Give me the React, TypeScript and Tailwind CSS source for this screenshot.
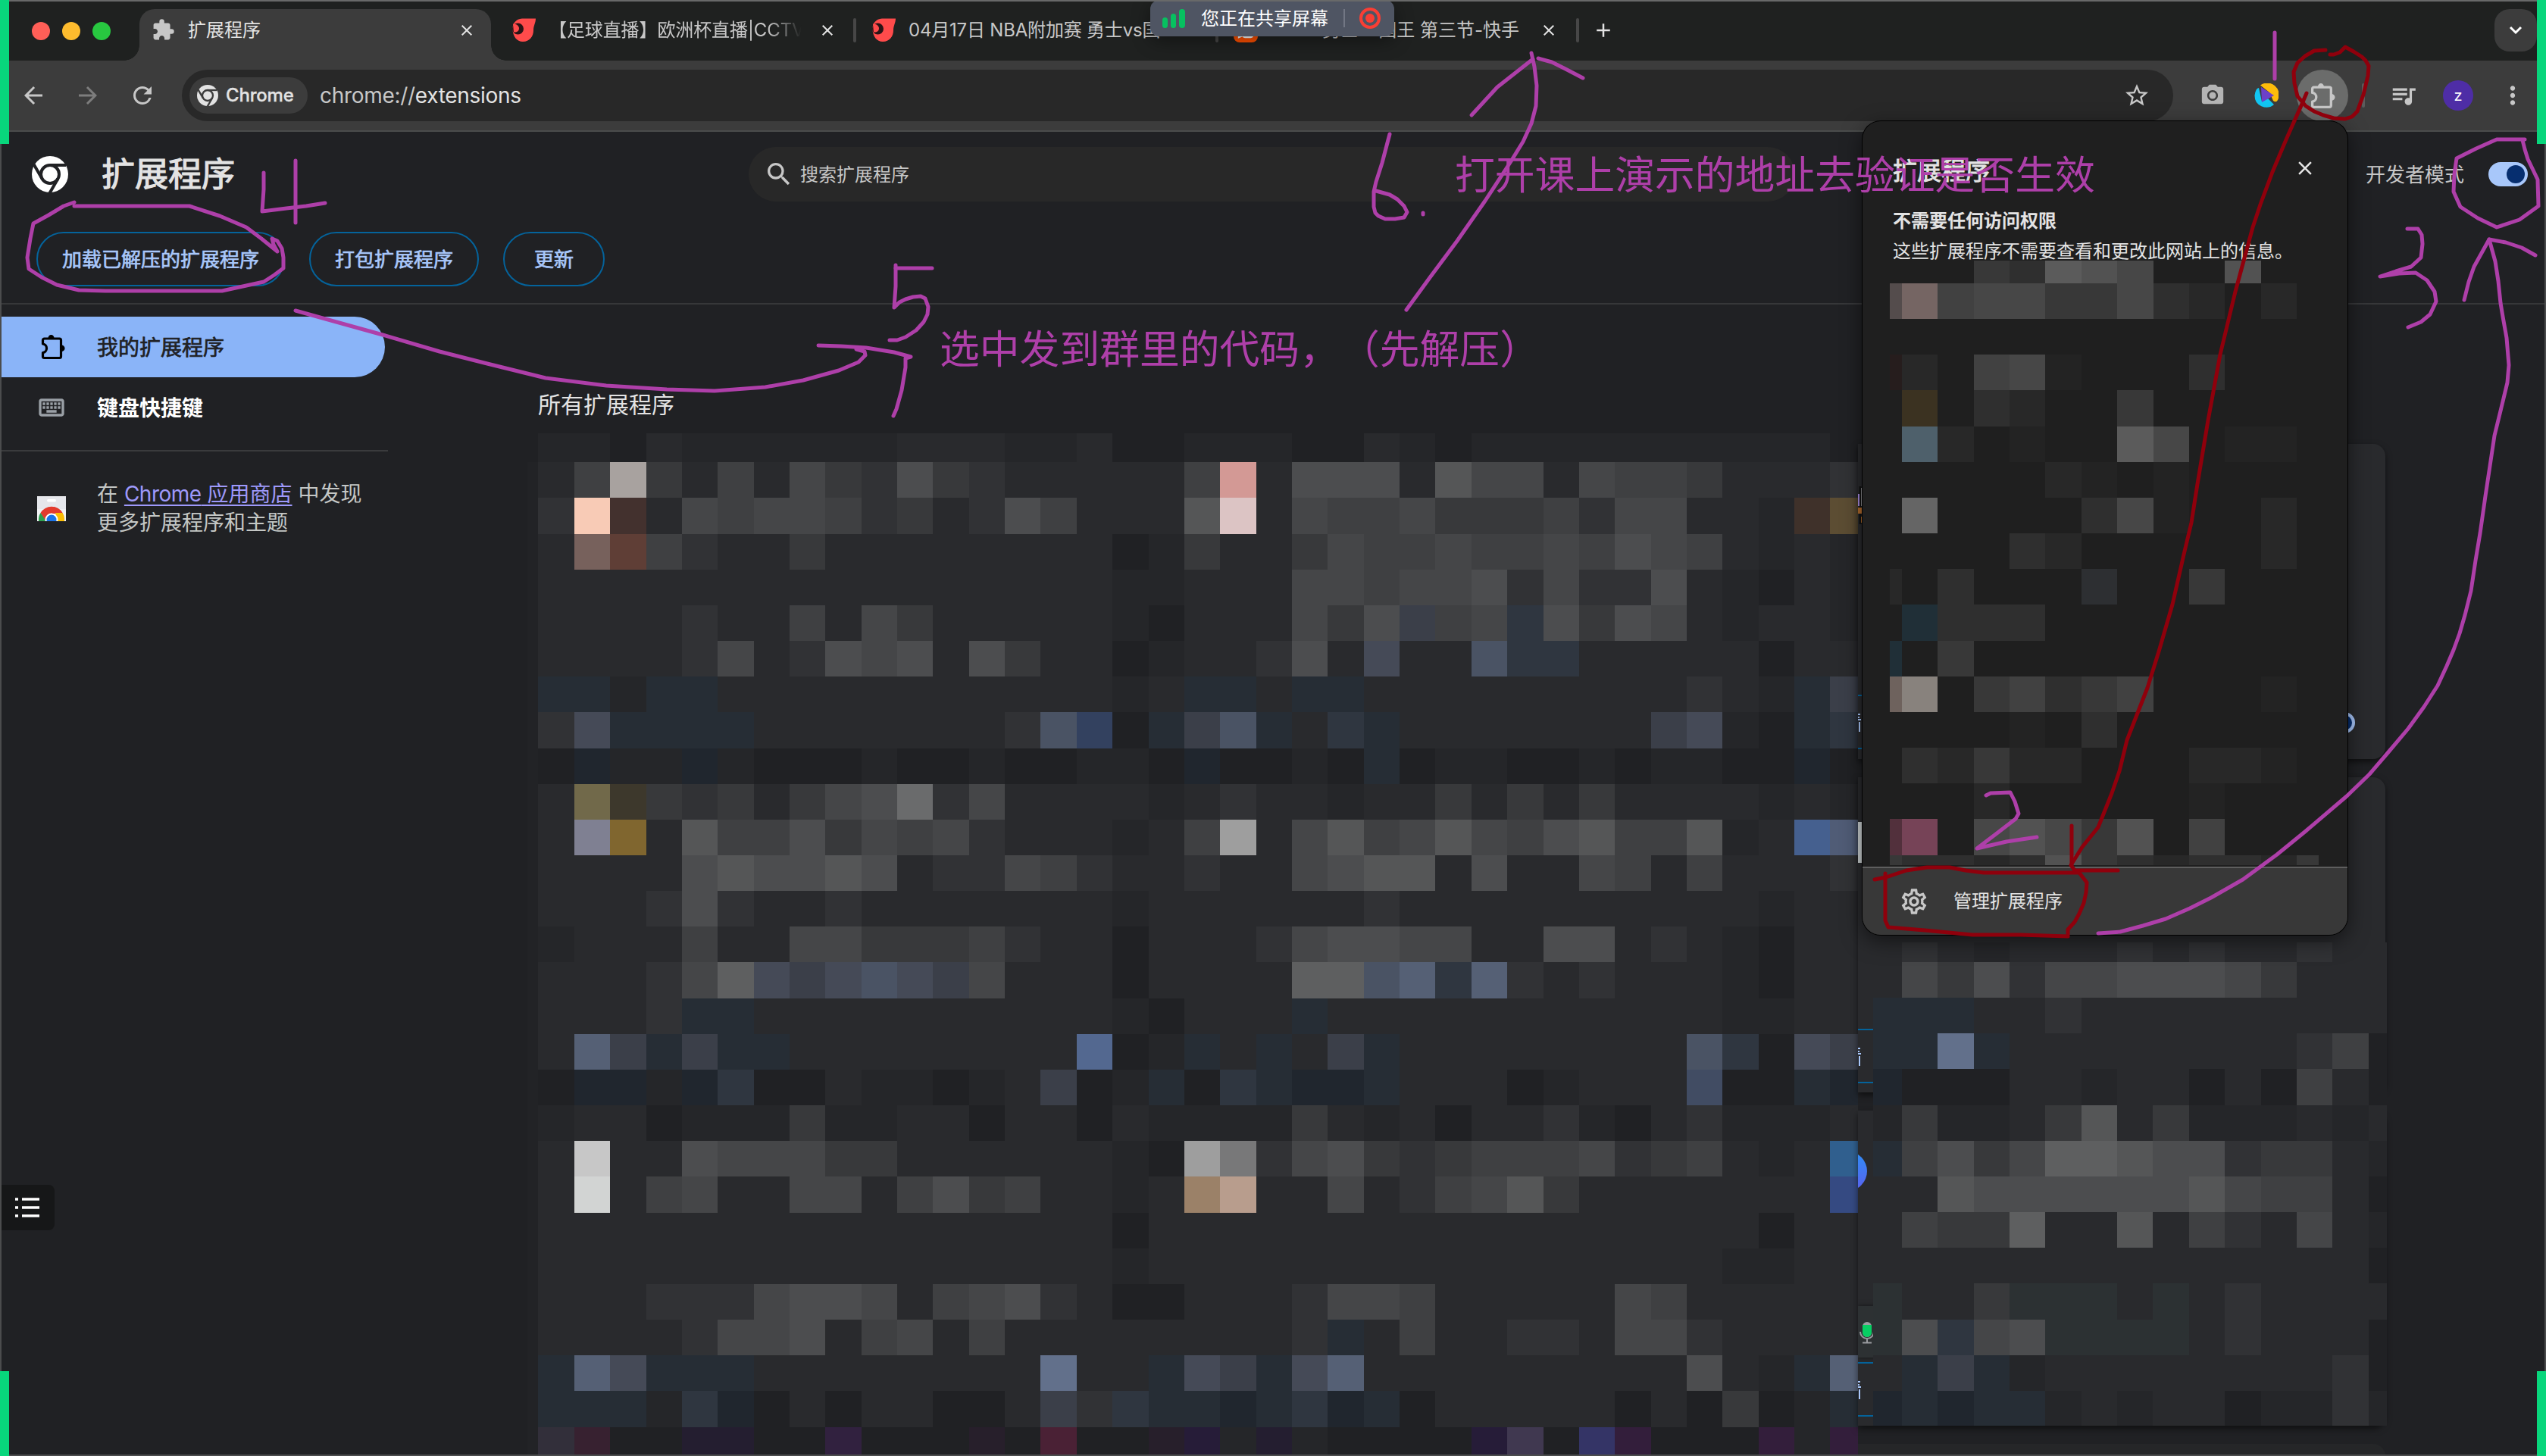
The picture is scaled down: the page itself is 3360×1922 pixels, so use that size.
import React from "react";
import {
  MdAdd,
  MdArrowBack,
  MdArrowForward,
  MdClose,
  MdExtension,
  MdMoreVert,
  MdOutlineKeyboard,
  MdOutlineQueueMusic,
  MdOutlineSettings,
  MdPhotoCamera,
  MdRefresh,
  MdSearch,
  MdStarBorder,
} from "react-icons/md";

/* ---------- pixelated regions ---------- */

const PALETTE: Record<string, string> = {
  a: "#202124", b: "#252629", ".": "#292a2d", d: "#313235", e: "#38393b", f: "#3f4042",
  g: "#454648", h: "#4c4d4f", i: "#555657", j: "#5e5f60", k: "#6a6b6c", l: "#2c3133",
  m: "#20262e", n: "#262d35", o: "#2f3640", p: "#3b3f49", q: "#454a57", r: "#4a5364",
  s: "#556075", t: "#62708b",
  A: "#a8a29f", B: "#f8cbb6", C: "#43312e", D: "#77615c", E: "#5f3e36", F: "#33415f",
  G: "#71694a", H: "#3d382c", I: "#7f8092", J: "#80662f", K: "#d39995", L: "#dcc4c4",
  M: "#3f312a", N: "#5c4d33", O: "#45608f", P: "#505c76", Q: "#9e9e9e", R: "#536890",
  S: "#c7c7c7", T: "#d2d4d3", U: "#787879", V: "#9b8168", W: "#b89d8d", X: "#305f8e",
  Y: "#354a82", Z: "#414c63",
  "0": "#271f2b", "1": "#241e30", "2": "#372130", "3": "#31213f", "4": "#4a2135",
  "5": "#322f3a", "6": "#403850", "7": "#343466", "8": "#261c38", "9": "#331e3b",
  _: "#1f1f1f", u: "#232323", v: "#282828", w: "#2f2f2f", x: "#383838", y: "#414141",
  z: "#474747", "+": "#525252", "=": "#5b5b5b", "!": "#544c4c", "@": "#756563",
  "#": "#261d1d", $: "#3b3221", "%": "#4e606b", "^": "#656565", "&": "#2d2f32",
  "*": "#202f37", "(": "#6e625d", ")": "#88827d", "[": "#52303c", "]": "#764357",
};

const CARDS_MOSAIC = [
  "bba.bbbbbb...bb.aabbbaa.babbbbbbbbbba",
  ".fAe.f.gedhed.....fK.hhh.igg.gffe...d",
  "dBC.gfggfde.dhf...iL.gffgeeefdgg..bMN",
  ".DEfd..e........abe..egffgffgfhgf.b.b",
  "................bb...ggfgghdgddh.ba.b",
  "....d..f.ge.....ba...gehpfgohehg.b..b",
  "....dg.dhgh.he..ab..dh.q..roo.....a..",
  "nnbnn...........b.nn.nn.........d.bnp",
  "dqnnnn.......drFanprn.on.......pqbano",
  "ambbmbaaabaabaabbamaabanabbaababbaama",
  ".GHede.eghkdg....b.d..b..e.e.e....b.b",
  ".IJ.iffhegfgd...b.fQ.gifgigfhiffib.OP",
  "....hihhih.ddgfd..d..ghii.h..gf.f...d",
  "...dhd..d.......b......d..........b..",
  "b...f..ggeeefd..a...dghhgg..hh.d.ba..",
  "...dgjqpqrqpg...a....jjrsosd.d...ba..",
  "...dnn..........ba...n...........bb..",
  ".spnpnn........Rabn.n.pn........roaqp",
  "ammbmoaa.bbab.pabnaonmmn...ab...Zaanm",
  "b..abbbebb..a..a.bbbbe.b.a..dba.dbbb.",
  ".S..hgggee......baQUdghedefffgdef.b.X",
  ".T.fg..gg.fhef..b.VW..g.dfgie.......Y",
  "................a.................a..",
  "................b................bb..",
  "...dddghhg.fghd.aa...dggf.....gf.....",
  "....dggh.fg.f........dn.f..dd.ggd....",
  "nsqnnn........t..nqpnqs.........h.bns",
  "nnnboma.a..aa.pdonnmnomna.....a.aeabn",
  "52aa11aa3aaa0a4aa08b1baaaa86a79aaa9b9",
];

const POPUP_MOSAIC = [
  "___xw=+z__+__", "!@yzzxxzwv_v_", "_____________", "#v_yzu___w___", "_$_wv__x_____",
  "_%v_u__=z_uu_", "_____vu_u____", "_^____wzu__v_", "____wv_____v_", "v_w___&__x___",
  "_*www________", "*_x__________", "()_xywxy___u_", "____u_w______", "_wvxvv___vvu_",
  "___v_____u___", "[]_z+zx+_y___", "xwwvw+xwvwwvx",
];

const THIRD_CARD_MOSAIC = [
  ".d.b...d.d..d..", ".gehdgghhhge...", "nnn..d.........", "nntn........dfa",
  "maaa..b..a.af.a", "bebb.ei.ebbb.b.", "nfhegjjihhdee.b", "..ihhhhhhigff.a",
  ".feej..i.fd.g.b", "..............a", "l..elll.l.d....", "lhoghllll.d...a",
  ".npnb........da", "mnmnnb.b..abbdb",
];

const CELL_W = 47.36;
const CELL_H = 47.17;

type MosaicProps = { rows: string[]; first: number; last: number; top: number; bottom: number };

function Mosaic({ rows, first, last, top, bottom }: MosaicProps) {
  const cols = rows[0].length;
  return (
    <div
      className="grid shrink-0"
      style={{
        gridTemplateColumns: `${first}px repeat(${cols - 2}, ${CELL_W}px) ${last}px`,
        gridTemplateRows: `${top}px repeat(${rows.length - 2}, ${CELL_H}px) ${bottom}px`,
      }}
    >
      {rows.flatMap((row, r) =>
        row.split("").map((c, i) => <div key={`${r}-${i}`} style={{ backgroundColor: PALETTE[c] }} />)
      )}
    </div>
  );
}

/* ---------- icons ---------- */

function ChromeMark({ className, gap }: { className: string; gap: string }) {
  return (
    <svg viewBox="0 0 48 48" className={className}>
      <circle cx="24" cy="24" r="24" fill="currentColor" />
      <g stroke={gap} strokeWidth="4" fill="none">
        <circle cx="24" cy="24" r="12" />
        <path d="M24 12H45" />
        <path d="M24 12H46" transform="rotate(120 24 24)" />
        <path d="M24 12H46" transform="rotate(240 24 24)" />
      </g>
    </svg>
  );
}

function PuzzleOutline({ className }: { className: string }) {
  return (
    <svg viewBox="0 0 34 34" className={className} fill="none">
      <path
        d="M3.5 13V8a2 2 0 0 1 2-2h20a2 2 0 0 1 2 2v21.500a2 2 0 0 1-2 2h-20a2 2 0 0 1-2-2V24.500a5.800 5.800 0 0 0 0-11.500z"
        stroke="currentColor"
        strokeWidth="3.200"
        strokeLinejoin="round"
      />
      <path d="M10.500 5.500a4 4.500 0 0 1 8 0zM28 14.500a4.500 4.200 0 0 1 0 8.500z" fill="currentColor" />
    </svg>
  );
}

function CctvIcon() {
  return (
    <svg viewBox="0 0 32 32" className="h-8 w-8 shrink-0">
      <path d="M31 0.500L13 0.500C5 1 0 7 0.500 15C1 24 6 31 14 31C23 31 28 24 28 16C28 10 31 6 31 0.500Z" fill="#ff4b4b" />
      <circle cx="7.500" cy="14" r="7.500" fill="#2a1416" />
      <path d="M1 7.500C5 7 9 10 9 13.500C9 17 6 19 2 18.500Z" fill="#ff4b4b" />
    </svg>
  );
}

function StoreIcon() {
  return (
    <svg viewBox="0 0 38 33" className="h-[33px] w-[38px]">
      <rect width="38" height="33" fill="#f1f1f4" />
      <rect width="38" height="17" fill="#e6e7ec" />
      <rect x="13" y="4" width="12" height="3.500" rx="1.700" fill="#fff" />
      <path d="M19 14a17 17 0 0 1 15 9H19z" fill="#d93025" />
      <path d="M4.500 22A17 17 0 0 1 33.500 22L19 22 12 33H10z" fill="#e33b2e" />
      <path d="M4.500 22A17 17 0 0 0 2 33H12z" fill="#2ea04f" />
      <path d="M33.500 22A17 17 0 0 1 36 33H26L24 22z" fill="#fbbc04" />
      <circle cx="19" cy="31" r="8.500" fill="#fff" />
      <circle cx="19" cy="31" r="6.500" fill="#1a73e8" />
    </svg>
  );
}

/* ---------- tab strip ---------- */

function TabStrip() {
  return (
    <div className="flex h-20 shrink-0 items-start bg-[#1f2120] pl-[42px] text-[24px] leading-none text-[#c7c7c7]">
      <div className="flex h-20 w-[142px] items-center gap-4 pt-[2px]">
        <span className="h-6 w-6 rounded-full bg-[#ff5f57]" />
        <span className="h-6 w-6 rounded-full bg-[#febc2e]" />
        <span className="h-6 w-6 rounded-full bg-[#28c840]" />
      </div>
      <div className="relative mt-3 flex h-[68px] w-[464px] items-start rounded-t-[20px] bg-[#3c3c3c] pl-[16px] pt-[12px] text-[#e3e3e3]">
        <div className="absolute -left-5 bottom-0 h-5 w-5 bg-[radial-gradient(circle_at_0_0,#1f2120_19.5px,#3c3c3c_20px)]" />
        <div className="absolute -right-5 bottom-0 h-5 w-5 bg-[radial-gradient(circle_at_100%_0,#1f2120_19.5px,#3c3c3c_20px)]" />
        <MdExtension className="h-[31px] w-[31px] text-[#c7c7c7]" />
        <span className="ml-[17px] w-[356px] pt-[4px]">扩展程序</span>
        <MdClose className="mt-[4px] h-6 w-6 text-[#e3e3e3]" />
      </div>
      <div className="flex h-20 w-[482px] items-center pl-[28px]">
        <CctvIcon />
        <span className="ml-[16px] w-[344px] overflow-hidden whitespace-nowrap pb-[2px] pt-[2px] tracking-[-0.1px] [mask-image:linear-gradient(90deg,#000_84%,transparent_97%)]">
          【足球直播】欧洲杯直播|CCTV
        </span>
        <MdClose className="ml-[12px] h-6 w-6 text-[#e3e3e3]" />
        <span className="ml-auto h-8 w-[4px] rounded-full bg-[#474747]" />
      </div>
      <div className="flex h-20 w-[478px] items-center pl-[21px]">
        <CctvIcon />
        <span className="ml-[16px] whitespace-nowrap tracking-[-0.2px]">04月17日 NBA附加赛 勇士vs国</span>
        <span className="ml-auto h-8 w-[4px] rounded-full bg-[#474747]" />
      </div>
      <div className="flex h-20 w-[476px] items-center pl-5">
        <span className="flex h-8 w-8 items-center justify-center rounded-lg bg-[#ff5000]">
          <svg viewBox="0 0 20 20" className="h-[22px] w-[22px]" fill="none" stroke="#fff" strokeWidth="2.500">
            <circle cx="6" cy="4" r="2.500" />
            <circle cx="13" cy="4" r="3" />
            <rect x="7" y="10" width="11" height="8" rx="2" />
            <path d="M2 12l5 2v2l-5 2z" />
          </svg>
        </span>
        <span className="ml-[16px] flex w-[344px] whitespace-nowrap">
          <span className="w-[69px]">4.17</span>
          <span>勇士vs国王 第三节-快手</span>
        </span>
        <MdClose className="ml-[12px] h-6 w-6 text-[#e3e3e3]" />
        <span className="ml-auto h-8 w-[4px] rounded-full bg-[#474747]" />
      </div>
      <div className="flex h-20 w-[64px] items-center justify-center">
        <MdAdd className="h-[30px] w-[30px] text-[#e3e3e3]" />
      </div>
      <div className="ml-auto mr-3 mt-3 flex h-14 w-14 items-center justify-center rounded-[20px] bg-[#3c3c3c]">
        <svg viewBox="0 0 18 12" className="h-3 w-[18px]" fill="none" stroke="#fff" strokeWidth="3">
          <path d="M2 2l7 7 7-7" />
        </svg>
      </div>
    </div>
  );
}

function Toolbar() {
  return (
    <div className="flex h-[94px] shrink-0 items-center border-b-2 border-[#4a4c4b] bg-[#3c3c3c] pl-[26px] text-[#c7c7c7]">
      <MdArrowBack className="h-9 w-9" />
      <MdArrowForward className="ml-[36px] h-9 w-9 text-[#7d7d7d]" />
      <MdRefresh className="ml-[36px] h-9 w-9" />
      <div className="ml-[34px] flex h-[68px] w-[2628px] items-center rounded-full bg-[#282828] pl-[10px] pr-[30px]">
        <div className="flex h-12 w-[156px] items-center rounded-full bg-[#3c3c3c] pl-[10px] text-[#e3e3e3]">
          <ChromeMark className="h-7 w-7" gap="#3c3c3c" />
          <span className="ml-[10px] text-[24px] font-medium tracking-[-0.2px] [-webkit-text-stroke:0.3px]">Chrome</span>
        </div>
        <span className="ml-[16px] whitespace-nowrap text-[28px] tracking-[-0.3px] text-[#c7c7c7]">
          chrome://<span className="text-[#e3e3e3]">extensions</span>
        </span>
        <MdStarBorder className="ml-auto h-[36px] w-[36px]" />
      </div>
      <MdPhotoCamera className="ml-[35px] h-[34px] w-[34px] text-[#b4b4b4]" />
      <svg viewBox="0 0 32 32" className="ml-[38px] h-8 w-8">
        <path d="M8 2.500A15.500 15.500 0 0 1 31 22Q29 26 25 23L20 12z" fill="#fdbc0b" />
        <path d="M6 6Q2 6 0.500 16A15.500 15.500 0 0 0 26 28L18 20 10 24z" fill="#12c6f2" />
        <path d="M9 5L26 16 10 25z" fill="#6c40c8" />
      </svg>
      <div className="ml-[24px] flex h-[68px] w-[68px] items-center justify-center rounded-full bg-[#6b6c6b]">
        <PuzzleOutline className="h-[35px] w-[35px]" />
      </div>
      <span className="ml-[18px] h-8 w-[4px] rounded-full bg-[#5c5c5c]" />
      <MdOutlineQueueMusic className="ml-[32px] h-[38px] w-[38px]" />
      <span className="ml-[33px] flex h-10 w-10 items-center justify-center rounded-full bg-[#4e2da6] text-[20px] text-white">z</span>
      <MdMoreVert className="ml-[33px] h-[38px] w-[38px]" />
    </div>
  );
}

/* ---------- extensions page ---------- */

function PageHeader() {
  return (
    <header className="shrink-0 border-b-2 border-[#363739] text-[#e3e3e3]">
      <div className="flex h-[112px] items-center pl-[42px] pr-[24px]">
        <ChromeMark className="h-12 w-12 text-white" gap="#202124" />
        <h1 className="ml-[44px] w-[176px] whitespace-nowrap text-[44px] leading-none [-webkit-text-stroke:1.2px]">扩展程序</h1>
        <div className="ml-[678px] flex h-[72px] w-[1381px] items-center rounded-full bg-[#282828] pl-[20px] text-[#c7c7c7]">
          <MdSearch className="h-10 w-10" />
          <span className="ml-[8px] pt-[2px] text-[24px] leading-none">搜索扩展程序</span>
        </div>
        <span className="ml-auto pt-[2px] text-[26px] leading-none text-[#c7c7c7]">开发者模式</span>
        <span className="ml-[32px] flex h-8 w-[52px] items-center justify-end rounded-full bg-[#a8c7fa] pr-[4px]">
          <span className="h-6 w-6 rounded-full bg-[#062e6f]" />
        </span>
      </div>
      <div className="flex h-[114px] gap-8 pl-12 pt-[20px] text-[26px] leading-none text-[#a8c7fa] [-webkit-text-stroke:0.7px]">
        <div className="flex h-[72px] w-[328px] items-center justify-center rounded-full border-2 border-[#04639b] pt-[2px]">加载已解压的扩展程序</div>
        <div className="flex h-[72px] w-[224px] items-center justify-center rounded-full border-2 border-[#04639b] pt-[2px]">打包扩展程序</div>
        <div className="flex h-[72px] w-[134px] items-center justify-center rounded-full border-2 border-[#04639b] pt-[2px]">更新</div>
      </div>
    </header>
  );
}

function Sidebar() {
  return (
    <nav className="w-[512px] shrink-0 pt-4 text-[28px]">
      <div className="ml-[2px] flex h-20 w-[506px] items-center rounded-r-full bg-[#8ab4f8] pl-[51px] leading-none text-[#202124] [-webkit-text-stroke:0.7px]">
        <PuzzleOutline className="h-[34px] w-[34px] text-black" />
        <span className="ml-[41px] pt-[1px]">我的扩展程序</span>
      </div>
      <div className="flex h-20 items-center pl-[48px] font-bold leading-none text-white">
        <MdOutlineKeyboard className="h-10 w-10 text-[#9aa0a6]" />
        <span className="ml-[40px] pt-[1px]">键盘快捷键</span>
      </div>
      <div className="mt-4 h-[2px] bg-[#3a3b3d]" />
      <div className="flex items-center pl-[49px] pt-[37px] text-[#c4c7c5]">
        <StoreIcon />
        <p className="ml-[41px] w-[360px] leading-[38px]">
          在{" "}
          <span className="text-[#9e99fb] underline underline-offset-4">
            <span className="tracking-[-0.5px]">Chrome</span> 应用商店
          </span>{" "}
          中发现
          <br />
          更多扩展程序和主题
        </p>
      </div>
    </nav>
  );
}

/* Left edge of an outlined button; only the first stroke of its label is visible. */
function CardButton({ className }: { className: string }) {
  return (
    <div className={`h-[72px] w-[20px] border-y-2 border-[#04639b] pt-[22px] ${className}`}>
      <svg viewBox="0 0 5 26" className="h-[26px] w-[5px]" stroke="#a8c7fa" strokeWidth="2">
        <path d="M0 2h3M0 6h2M0 9h4M2 12v13" />
      </svg>
    </div>
  );
}

function CardColumn() {
  return (
    <div className="relative w-[696px] shrink-0 pt-[14px]">
      <div className="flex flex-col gap-6">
        <div className="flex h-[416px] items-start rounded-r-2xl bg-[#292a2d] shadow-[0_4px_8px_#0008]">
          <div className="flex w-[20px] flex-col pt-[56px]">
            <svg viewBox="0 0 6 50" className="h-[50px] w-[6px]">
              <path d="M3 0v50" stroke="#111" strokeWidth="3" />
              <path d="M5 2v24" stroke="#8c8c90" strokeWidth="2" />
              <path d="M1 10v16" stroke="#a78be0" strokeWidth="2" />
              <path d="M0 28h6v8H0zM4 40h2v8H4z" fill="#b06a2c" />
            </svg>
            <CardButton className="mt-[225px]" />
          </div>
          <div className="ml-auto mr-[40px] mt-[354px] h-[28px] w-[28px] rounded-full border-4 border-[#a8c7fa] bg-[#062e6f]" />
        </div>
        <div className="h-[416px] rounded-r-2xl bg-[#292a2d] pt-[59px] shadow-[0_4px_8px_#0008]">
          <div className="h-[54px] w-[6px] bg-[#c9cfd0]" />
          <CardButton className="mt-[219px]" />
        </div>
        <div className="h-[416px] overflow-hidden rounded-r-2xl bg-[#292a2d] pt-[54px] shadow-[0_4px_8px_#0008]">
          <div className="h-[52px] w-[12px] overflow-hidden">
            <div className="-ml-10 h-[52px] w-[52px] rounded-full bg-[linear-gradient(#2f8df5,#5a62f0)]" />
          </div>
          <div className="mt-[152px] flex h-[68px] w-[36px] justify-start bg-[#2d3133] pt-[20px] shadow-[0_0_6px_#0008]">
            <svg viewBox="0 0 20 30" className="ml-[2px] h-[30px] w-5" fill="none">
              <rect x="4" y="1" width="12" height="20" rx="6" fill="#9a9ca0" />
              <path d="M4 5h12v10a6 6 0 0 1-12 0z" fill="#07ce63" />
              <path d="M1 14a9 9 0 0 0 18 0M10 23v5M4 28.500h12" stroke="#9a9ca0" strokeWidth="2" />
            </svg>
          </div>
          <CardButton className="mt-[6px]" />
        </div>
        <div className="h-[40px] rounded-tr-2xl bg-[#252628]" />
      </div>
      <div className="absolute left-[20px] top-[672px]">
        <Mosaic rows={THIRD_CARD_MOSAIC} first={38} last={24.3} top={26} bottom={46} />
      </div>
    </div>
  );
}

/* ---------- overlays ---------- */

function ShareBanner() {
  return (
    <div className="absolute left-[1518px] top-0 flex h-12 w-[322px] items-center rounded-xl bg-[#4f5563] pl-4 shadow-[0_6px_24px_#0006]">
      <div className="flex h-[25px] items-end gap-[4px] pt-[2px]">
        <span className="h-[14px] w-[7px] rounded-full bg-[#07c160]" />
        <span className="h-[19px] w-[7px] rounded-full bg-[#07c160]" />
        <span className="h-[25px] w-[8px] rounded-full bg-[#07c160]" />
      </div>
      <span className="ml-[21px] whitespace-nowrap pt-[1px] text-[24px] leading-none text-white">您正在共享屏幕</span>
      <span className="ml-[20px] h-6 w-[2px] bg-[#727784]" />
      <span className="ml-[19px] flex h-7 w-7 items-center justify-center rounded-full border-[4px] border-[#fa3e34]">
        <span className="h-3 w-3 rounded-full bg-[#fa3e34]" />
      </span>
    </div>
  );
}

function ExtensionsPopup() {
  return (
    <div className="absolute left-[2458px] top-[160px] flex h-[1074px] w-[640px] flex-col overflow-hidden rounded-[24px] bg-[#1f1f1f] text-[#e3e3e3] shadow-[0_0_0_1px_#000,0_8px_28px_#0008]">
      <div className="flex h-[124px] items-center pl-[40px] pr-[41px]">
        <span className="pt-[7px] text-[32px] leading-none [-webkit-text-stroke:0.9px]">扩展程序</span>
        <MdClose className="ml-auto h-[30px] w-[30px]" />
      </div>
      <div className="h-[60px] pl-[40px] text-[24px] leading-[40px]">
        <p className="-mt-[12px] font-bold">不需要任何访问权限</p>
        <p>这些扩展程序不需要查看和更改此网站上的信息。</p>
      </div>
      <div className="ml-[36px]">
        <Mosaic rows={POPUP_MOSAIC} first={16} last={29} top={30} bottom={13} />
      </div>
      <div className="mt-auto flex h-[90px] items-center border-t-2 border-[#5e5e5e] bg-[#383838] pl-[48px]">
        <MdOutlineSettings className="h-10 w-10 text-[#c7c7c7]" />
        <span className="ml-[32px] text-[24px] leading-none">管理扩展程序</span>
      </div>
    </div>
  );
}

const PURPLE_STROKES = [
  "348,228 348,250 346,279 378,275 404,272 429,268",
  "390,212 390,294",
  "98,267 84,272 64,284 44,295 40,315 36,340 38,355 55,366 75,376 104,383 139,384 293,384 325,377 348,372 362,363 374,354 374,340 372,328 366,318 359,315 361,323 366,332 345,315 325,300 290,285 250,272 98,272",
  "390,410 505,442 580,464 643,480 720,499 800,509 880,514 943,516 1010,511 1060,502 1107,489 1133,478 1142,469 1141,464 1130,461",
  "1182,350 1182,378 1180,406 1187,399 1195,395 1205,392 1215,391 1221,394 1225,405 1224,415 1219,425 1209,436 1195,445 1184,449 1174,449",
  "1182,354 1230,354",
  "1080,456 1110,457 1143,459 1180,465 1202,471 1195,473 1195,485 1190,515 1183,540 1179,549",
  "1834,177 1824,215 1816,240 1813,253 1813,273 1815,281 1819,285 1828,289 1841,289 1853,287 1857,280 1853,272 1844,263 1834,257 1816,252",
  "1878,281 1878,283",
  "1856,409 1888,365 1923,318 1960,265 1994,213 2010,187 2021,163 2027,140 2028,113 2025,88 2021,70",
  "1942,152 1976,115 2023,78",
  "2030,77 2048,82 2066,91 2089,103",
  "3002,43 3002,104",
  "3332,184 3295,184 3268,196 3242,209 3239,230 3238,253 3247,273 3270,288 3295,300 3325,290 3350,272 3349,237 3336,210 3332,197 3329,185",
  "3177,302 3191,302 3196,310 3197,322 3195,340 3182,352 3162,358 3141,365 3166,361 3188,360 3203,370 3213,385 3215,398 3207,415 3195,425 3178,432",
  "3252,396 3258,372 3265,352 3285,316 3307,320 3328,327 3346,337",
  "2621,1050 2627,1047 2653,1046 2659,1058 2664,1074 2660,1081 2634,1101 2609,1120 2648,1111 2688,1105",
  "2769,1232 2798,1230 2828,1222 2858,1213 2890,1199 2918,1185 2960,1161 3005,1128 3043,1097 3097,1051 3127,1022 3151,994 3178,962 3199,933 3217,905 3229,879 3238,858 3246,836 3253,812 3261,780 3267,740 3273,704 3280,655 3286,615 3292,575 3303,530 3309,505 3311,482 3308,446 3303,418 3300,400 3297,371 3293,345 3285,316",
];

const RED_STROKES = [
  "3069,66 3054,67 3042,74 3032,83 3027,95 3028,110 3032,127 3043,140 3054,147 3066,152 3080,156 3095,157 3104,154 3111,147 3119,125 3125,100 3126,87 3122,80 3117,75 3106,68 3095,62 3088,69 3080,72 3075,72",
  "3044,123 3038,137 3018,182 2999,227 2983,270 2973,300 2950,385 2930,468 2914,555 2900,639 2892,690 2882,732 2867,798 2849,860 2834,908 2807,977 2797,1018 2787,1047 2769,1092 2748,1118 2733,1142 2738,1149 2795,1149",
  "2734,1090 2734,1142",
  "2474,1161 2489,1158 2516,1149 2543,1145 2573,1145 2594,1149 2618,1152 2744,1152 2754,1165 2753,1178 2750,1192 2744,1206 2738,1217 2729,1227 2729,1236 2666,1234 2603,1234 2540,1228 2492,1224 2488,1215 2488,1153",
];

function Annotations() {
  return (
    <>
      <svg viewBox="0 0 3360 1922" className="pointer-events-none absolute inset-0 h-full w-full" fill="none" strokeWidth="5" strokeLinecap="round" strokeLinejoin="round">
        {RED_STROKES.map((p) => (
          <polyline key={p} points={p} stroke="#8f000c" />
        ))}
        {PURPLE_STROKES.map((p) => (
          <polyline key={p} points={p} stroke="#ae3fa9" />
        ))}
      </svg>
      <p className="absolute left-[1920px] top-[205px] whitespace-nowrap text-[52.8px] leading-[52px] text-[#ae3fa9]">打开课上演示的地址去验证是否生效</p>
      <p className="absolute left-[1240px] top-[435px] whitespace-nowrap text-[52.8px] leading-[52px] text-[#ae3fa9] [text-spacing-trim:space-all]">选中发到群里的代码，（先解压）</p>
    </>
  );
}

export default function App() {
  return (
    <div className="relative flex h-[1922px] w-[3360px] flex-col overflow-hidden bg-[#202124] font-['Inter','Noto_Sans_CJK_SC',sans-serif]">
      <TabStrip />
      <Toolbar />
      <PageHeader />
      <div className="flex min-h-0 flex-1 overflow-hidden">
        <Sidebar />
        <main className="ml-[184px] min-w-0 flex-1">
          <h2 className="h-[170px] pl-[14px] pt-[117px] text-[30px] leading-none text-[#e3e3e3]">所有扩展程序</h2>
          <div className="flex items-start">
            <div className="mt-[38px] h-[1310px] w-[14px] bg-[#222326]" />
            <Mosaic rows={CARDS_MOSAIC} first={47.8} last={36.6} top={38.3} bottom={36.7} />
            <CardColumn />
          </div>
        </main>
      </div>

      <div className="absolute left-0 top-[1564px] flex h-[60px] w-[72px] items-center justify-center rounded-r-lg bg-[#161718]">
        <svg viewBox="0 0 32 28" className="h-7 w-8" stroke="#fff" strokeWidth="3.500">
          <path d="M0 3h4M9 3h23M0 14h4M9 14h23M0 25h4M9 25h23" />
        </svg>
      </div>

      <ExtensionsPopup />
      <ShareBanner />
      <Annotations />

      <div className="pointer-events-none absolute inset-0 border-2 border-[#4b4c4d] border-t-[#686969]" />
      <div className="absolute left-0 top-0 h-[190px] w-3 bg-[#08d67c]" />
      <div className="absolute right-0 top-0 h-[190px] w-3 bg-[#08d67c]" />
      <div className="absolute bottom-0 left-0 h-[112px] w-3 bg-[#08d67c]" />
      <div className="absolute bottom-0 right-0 h-[112px] w-3 bg-[#08d67c]" />
    </div>
  );
}
